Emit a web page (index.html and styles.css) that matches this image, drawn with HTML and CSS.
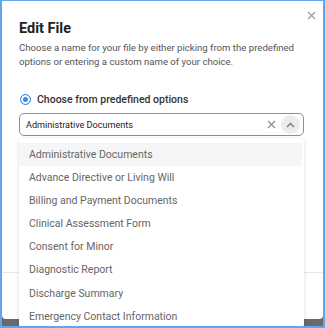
FILE: index.html
```html
<!DOCTYPE html>
<html lang="en">
<head>
  <meta charset="utf-8">
  <title>Edit File</title>
  <link rel="stylesheet" href="styles.css">
</head>
<body>
  <div class="frame">
    <div class="dialog">
      <button class="close" aria-label="Close">
        <svg width="9" height="9" viewBox="0 0 9 9"><path d="M1 1L8 8M8 1L1 8" stroke="#9a9a9a" stroke-width="1.2" fill="none"/></svg>
      </button>
      <h2 class="title">Edit File</h2>
      <p class="desc">Choose a name for your file by either picking from the predefined<br>options or entering a custom name of your choice.</p>

      <label class="radio-row">
        <span class="radio checked"></span>
        Choose from predefined options
      </label>

      <div class="select">
        <div class="select-box">
          <span class="select-value">Administrative Documents</span>
          <span class="clear">
            <svg width="9" height="9" viewBox="0 0 9 9"><path d="M1 1L8 8M8 1L1 8" stroke="#8a8a8a" stroke-width="1.1" fill="none"/></svg>
          </span>
          <span class="toggle">
            <svg width="9" height="6" viewBox="0 0 9 6"><path d="M1 5L4.5 1.5L8 5" stroke="#777" stroke-width="1.3" fill="none"/></svg>
          </span>
        </div>
        <ul class="menu">
          <li class="active">Administrative Documents</li>
          <li>Advance Directive or Living Will</li>
          <li>Billing and Payment Documents</li>
          <li>Clinical Assessment Form</li>
          <li>Consent for Minor</li>
          <li>Diagnostic Report</li>
          <li>Discharge Summary</li>
          <li>Emergency Contact Information</li>
        </ul>
      </div>

      <div class="radio-row second">
        <span class="radio"></span>
      </div>
      <div class="text-input"></div>

      <div class="footer">
        <span class="btn"></span>
        <span class="btn primary"></span>
      </div>
    </div>
  </div>
</body>
</html>
```

FILE: styles.css
```css
* {
  margin: 0;
  padding: 0;
  box-sizing: border-box;
}

body {
  font-family: Roboto, "Liberation Sans", sans-serif;
  background: #fff;
}

.frame {
  width: 325px;
  height: 328px;
  border: 2px solid #62a6ec;
  border-top-width: 1px;
  background: #6a6a6a;
  overflow: hidden;
}

.dialog {
  position: relative;
  height: 318px;
  background: #fff;
  border-radius: 0 0 4px 4px;
  padding: 19px 19px 0 17px;
}

.close {
  position: absolute;
  top: 8px;
  right: 6px;
  border: none;
  background: none;
  width: 12px;
  height: 12px;
  display: flex;
  align-items: center;
  justify-content: center;
}

.title {
  font-size: 14.5px;
  line-height: 18px;
  font-weight: 700;
  color: #222;
}

.desc {
  margin-top: 3px;
  font-size: 9.6px;
  line-height: 14px;
  color: #555;
  white-space: nowrap;
}

.radio-row {
  display: flex;
  align-items: center;
  gap: 6px;
  margin-top: 21px;
  height: 18px;
  font-size: 10.5px;
  font-weight: 500;
  color: #333;
  padding-left: 1px;
}

.radio {
  width: 11px;
  height: 11px;
  border-radius: 50%;
  border: 1px solid #bbb;
  background: #fff;
}

.radio.checked {
  border: 1.5px solid #2d8ff0;
  box-shadow: inset 0 0 0 2px #fff;
  background: #2d8ff0;
}

.select {
  position: relative;
  margin-top: 5px;
}

.select-box {
  height: 23px;
  border: 1px solid #4c9fec;
  border-radius: 5px;
  display: flex;
  align-items: center;
  padding: 0 3px 0 6px;
  font-size: 9.1px;
  color: #222;
}

.select-value {
  flex: 1;
}

.clear {
  display: flex;
  width: 14px;
  justify-content: center;
  margin-right: 3px;
}

.toggle {
  width: 19px;
  height: 19px;
  border-radius: 50%;
  background: #ececec;
  display: flex;
  align-items: center;
  justify-content: center;
}

.menu {
  position: absolute;
  top: 25px;
  left: 0;
  right: 0;
  z-index: 2;
  list-style: none;
  background: #fff;
  border-radius: 4px;
  box-shadow: 0 1px 4px rgba(0, 0, 0, 0.15);
  padding: 5px 2px 0 0;
}

.menu li {
  height: 23.1px;
  line-height: 23px;
  padding-left: 10px;
  font-size: 10.5px;
  color: #666;
}

.menu li.active {
  background: #f6f6f6;
}

.radio-row.second {
  margin-top: 22px;
}

.text-input {
  margin-top: 6px;
  height: 22px;
  border: 1px solid #d6d6d6;
  border-radius: 4px;
}

.footer {
  margin: 68px -19px 0 -17px;
  border-top: 1px solid #e8e8e8;
  padding: 14px 19px;
  display: flex;
  justify-content: flex-end;
  gap: 8px;
}

.btn {
  width: 50px;
  height: 24px;
  border: 1px solid #4c9fec;
  border-radius: 4px;
  background: #fff;
}

.btn.primary {
  background: #2d8ff0;
}
```
